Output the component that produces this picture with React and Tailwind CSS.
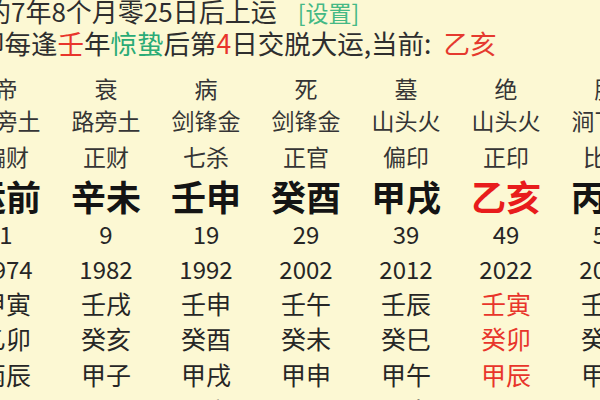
import React from "react";

const cols = [
  { s: "帝", ny: "路旁土", sh: "偏财", gz: "运前", age: "1", yr: "1974", ln: ["甲寅", "乙卯", "丙辰", "丁巳"] },
  { s: "衰", ny: "路旁土", sh: "正财", gz: "辛未", age: "9", yr: "1982", ln: ["壬戌", "癸亥", "甲子", "乙丑"] },
  { s: "病", ny: "剑锋金", sh: "七杀", gz: "壬申", age: "19", yr: "1992", ln: ["壬申", "癸酉", "甲戌", "乙亥"] },
  { s: "死", ny: "剑锋金", sh: "正官", gz: "癸酉", age: "29", yr: "2002", ln: ["壬午", "癸未", "甲申", "乙酉"] },
  { s: "墓", ny: "山头火", sh: "偏印", gz: "甲戌", age: "39", yr: "2012", ln: ["壬辰", "癸巳", "甲午", "乙未"] },
  { s: "绝", ny: "山头火", sh: "正印", gz: "乙亥", age: "49", yr: "2022", ln: ["壬寅", "癸卯", "甲辰", "乙巳"], cur: true },
  { s: "胎", ny: "涧下水", sh: "比肩", gz: "丙子", age: "59", yr: "2032", ln: ["壬子", "癸丑", "甲寅", "乙卯"] },
];

function Row({ h, cls, render }) {
  return (
    <div className={`flex ${h}`}>
      {cols.map((c, i) => (
        <div key={i} className={`w-[100px] shrink-0 flex items-center justify-center whitespace-nowrap ${cls} ${c.cur && render.red ? render.red : ""}`}>
          {render.get(c)}
        </div>
      ))}
    </div>
  );
}

export default function App() {
  return (
    <div
      className="w-[600px] h-[400px] overflow-hidden bg-[#fcf8d3] text-[#2b2b2b]"
      style={{ fontFamily: '"Noto Sans CJK SC", "Noto Sans", sans-serif' }}
    >
      <div className="h-[22px] leading-[22px] text-[26px] whitespace-nowrap ml-[-15px] text-[#2e2e2e]">
        约7年8个月零25日后上运<span className="ml-[21px] text-[23px] text-[#45b985]">[设置]</span>
      </div>
      <div className="h-[41px] leading-[41px] text-[26.5px] whitespace-nowrap ml-[-22px] text-[#2e2e2e]">
        即每逢<span className="text-[#e8352b]">壬</span>年<span className="text-[#2aab76]">惊蛰</span>后第<span className="text-[#e8352b]">4</span>日交脱大运,当前: <span className="ml-[6px] text-[#e53a2f]">乙亥</span>
      </div>
      <div className="ml-[-44px] mt-[10px]">
        <Row h="h-[31px]" cls="text-[23px] text-[#353535]" render={{ get: (c) => c.s }} />
        <Row h="h-[32px]" cls="text-[23px] text-[#353535]" render={{ get: (c) => c.ny }} />
        <Row h="h-[40px]" cls="text-[23px] text-[#353535]" render={{ get: (c) => c.sh }} />
        <Row h="h-[40px]" cls="text-[35px] font-bold text-[#141414]" render={{ get: (c) => c.gz, red: "text-[#e81c1c]" }} />
        <Row h="h-[35px]" cls="text-[24px] text-[#262626]" render={{ get: (c) => c.age }} />
        <Row h="h-[36px]" cls="text-[24px] text-[#262626]" render={{ get: (c) => c.yr }} />
        <Row h="h-[34px]" cls="text-[25px] text-[#262626]" render={{ get: (c) => c.ln[0], red: "text-[#e8352b]" }} />
        <Row h="h-[36px]" cls="text-[25px] text-[#262626]" render={{ get: (c) => c.ln[1], red: "text-[#e8352b]" }} />
        <Row h="h-[36px]" cls="text-[25px] text-[#262626]" render={{ get: (c) => c.ln[2], red: "text-[#e8352b]" }} />
        <Row h="h-[36px]" cls="text-[25px] text-[#262626]" render={{ get: (c) => c.ln[3], red: "text-[#e8352b]" }} />
      </div>
    </div>
  );
}
